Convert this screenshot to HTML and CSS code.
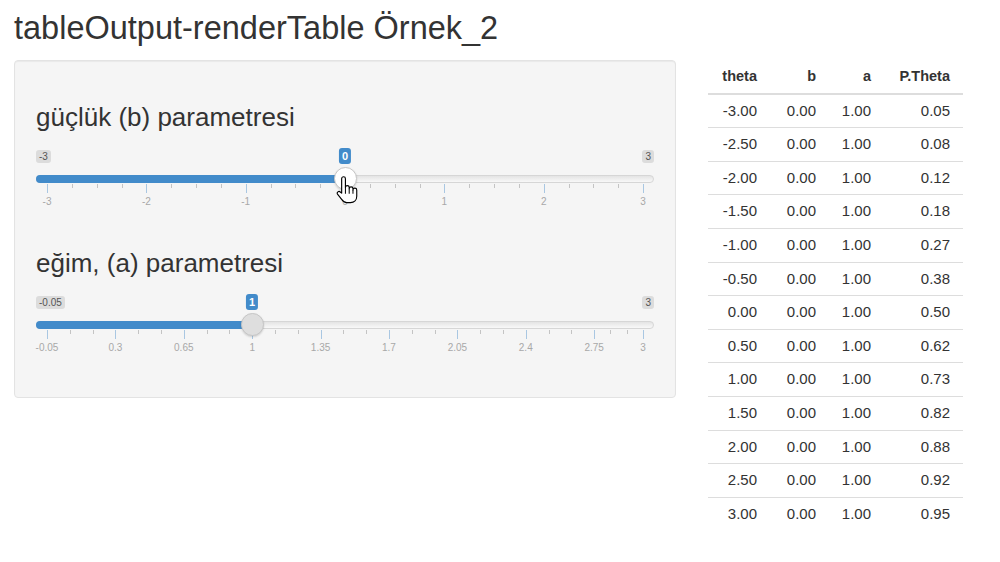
FILE: index.html
```html
<!DOCTYPE html>
<html lang="tr">
<head>
  <meta charset="UTF-8" />
  <meta name="viewport" content="width=device-width, initial-scale=1" />
  <title>tableOutput-renderTable Örnek_2</title>
  <link rel="stylesheet" href="styles.css">
</head>
<body>

  <div class="container">
    <h2 class="title">tableOutput-renderTable Örnek_2</h2>

    <div class="row">
      <div class="well">
        <div class="form-group">
          <h3 class="control-label">güçlük (b) parametresi</h3>
          <div class="irs" data-min="-3" data-max="3" data-value="0" data-step="1" data-minor="3" data-hover="1"></div>
        </div>
        <div class="form-group">
          <h3 class="control-label">eğim, (a) parametresi</h3>
          <div class="irs" data-min="-0.05" data-max="3" data-value="1" data-step="0.35" data-minor="2"></div>
        </div>
      </div>

      <table id="probTable" class="shiny-table">
        <thead>
          <tr>
            <th>theta</th>
            <th>b</th>
            <th>a</th>
            <th>P.Theta</th>
          </tr>
        </thead>
        <tbody></tbody>
      </table>
    </div>
  </div>

  <script>
    function fmt(v) {
      return String(parseFloat(v.toFixed(2)));
    }

    function buildSlider(el) {
      const min = +el.dataset.min;
      const max = +el.dataset.max;
      const value = +el.dataset.value;
      const step = +el.dataset.step;
      const minor = +el.dataset.minor;
      const hover = !!el.dataset.hover;
      const pct = v => (v - min) / (max - min) * 100;

      const majors = [];
      for (let v = min; v < max - 1e-9; v += step) majors.push(v);
      majors.push(max);

      let html = `
        <span class="irs-line"></span>
        <span class="irs-min">${fmt(min)}</span>
        <span class="irs-max">${fmt(max)}</span>
        <div class="irs-inner">
          <span class="irs-bar" style="width: calc(${pct(value)}% + 11px)"></span>`;

      majors.forEach((v, i) => {
        html += `<span class="irs-grid-pol" style="left: ${pct(v)}%"></span>`;
        html += `<span class="irs-grid-text" style="left: ${pct(v)}%">${fmt(v)}</span>`;
        if (i > 0) {
          const prev = majors[i - 1];
          for (let k = 1; k <= minor; k++) {
            const m = prev + (v - prev) * k / (minor + 1);
            html += `<span class="irs-grid-pol small" style="left: ${pct(m)}%"></span>`;
          }
        }
      });

      html += `
          <span class="irs-single" style="left: ${pct(value)}%">${fmt(value)}</span>
          <span class="irs-handle${hover ? ' hover' : ''}" style="left: ${pct(value)}%"></span>`;

      if (hover) {
        html += `
          <svg class="cursor" style="left: ${pct(value)}%" width="22" height="28" viewBox="0 0 17.5 22">
            <path d="M4.5 13.5 V2 a1.5 1.5 0 0 1 3 0 V9 a1.5 1.5 0 0 1 3 0 V10 a1.5 1.5 0 0 1 3 0 V11 a1.5 1.5 0 0 1 3 0 V16 c0 3 -2 5 -5 5 H8.5 c-2 0 -3 -1 -4 -2.5 L1.2 14.3 a1.4 1.4 0 0 1 2.2 -1.7 Z"
                  fill="#fff" stroke="#000" stroke-width="0.9" stroke-linejoin="round" />
            <path d="M7.5 9 V14 M10.5 10 V14 M13.5 11 V14" stroke="#000" stroke-width="0.8" fill="none" />
          </svg>`;
      }

      html += `</div>`;
      el.innerHTML = html;
    }

    document.querySelectorAll('.irs').forEach(buildSlider);

    // P(theta) = 1 / (1 + exp(-a (theta - b)))
    const tbody = document.querySelector('#probTable tbody');
    const b = 0, a = 1;
    for (let i = 0; i <= 12; i++) {
      const theta = -3 + i * 0.5;
      const p = 1 / (1 + Math.exp(-a * (theta - b)));
      const row = document.createElement('tr');
      row.innerHTML = `
        <td>${theta.toFixed(2)}</td>
        <td>${b.toFixed(2)}</td>
        <td>${a.toFixed(2)}</td>
        <td>${p.toFixed(2)}</td>
      `;
      tbody.appendChild(row);
    }
  </script>
</body>
</html>
```

FILE: styles.css
```css
body {
  margin: 0;
  font-family: "Liberation Sans", Arial, sans-serif;
  color: #333;
  background: #fff;
}

.container {
  padding: 0 14px;
}

.title {
  font-size: 32.5px;
  font-weight: normal;
  line-height: 35px;
  margin: 11px 0 14px;
}

.row {
  display: flex;
  align-items: flex-start;
}

.well {
  width: 662px;
  box-sizing: border-box;
  display: flex;
  flex-direction: column;
  padding: 20px 21px 24px;
  background: #f5f5f5;
  border: 1px solid #e3e3e3;
  border-radius: 4px;
  box-shadow: inset 0 1px 1px rgba(0, 0, 0, 0.05);
}

.form-group {
  display: flex;
  flex-direction: column;
  margin-bottom: 17px;
}

.control-label {
  font-size: 26px;
  font-weight: normal;
  line-height: 29px;
  margin: 22px 0 16px;
}

/* range slider */
.irs {
  position: relative;
  height: 62px;
}

.irs-line {
  position: absolute;
  left: 0;
  right: 0;
  top: 27px;
  height: 8px;
  box-sizing: border-box;
  border: 1px solid #d6d6d6;
  border-radius: 8px;
  background: linear-gradient(#e4e4e4, #f8f8f8);
}

.irs-inner {
  position: absolute;
  left: 11px;
  right: 11px;
  top: 0;
  bottom: 0;
}

.irs-bar {
  position: absolute;
  left: -11px;
  top: 27px;
  height: 8px;
  background: #428bca;
  border-radius: 8px 0 0 8px;
}

.irs-handle {
  position: absolute;
  top: 19px;
  width: 23px;
  height: 23px;
  margin-left: -11.5px;
  box-sizing: border-box;
  border-radius: 50%;
  background: #dedede;
  border: 1px solid #c6c6c6;
  box-shadow: 0 1px 2px rgba(0, 0, 0, 0.15);
}

.irs-handle.hover {
  background: #fff;
}

.irs-single {
  position: absolute;
  top: 0;
  transform: translateX(-50%);
  padding: 1px 3px;
  font-size: 11px;
  font-weight: bold;
  line-height: 14px;
  color: #fff;
  background: #428bca;
  border-radius: 3px;
}

.irs-min,
.irs-max {
  position: absolute;
  top: 2px;
  padding: 0 3px;
  font-size: 10px;
  line-height: 13px;
  color: #555;
  background: rgba(0, 0, 0, 0.1);
  border-radius: 3px;
}

.irs-min {
  left: 0;
}

.irs-max {
  right: 0;
}

.irs-grid-pol {
  position: absolute;
  top: 36px;
  width: 1px;
  height: 9px;
  background: #a9c7e2;
}

.irs-grid-pol.small {
  height: 4px;
  background: #c4c4c4;
}

.irs-grid-text {
  position: absolute;
  top: 48px;
  transform: translateX(-50%);
  font-size: 10px;
  line-height: 12px;
  color: #a8a8a8;
  white-space: nowrap;
}

.cursor {
  position: absolute;
  top: 28px;
  margin-left: -9.5px;
}

/* table */
.shiny-table {
  margin-left: 32px;
  border-collapse: collapse;
  font-size: 15px;
}

.shiny-table th,
.shiny-table td {
  text-align: right;
  padding: 7px 13px 7px 0;
  line-height: 18.6px;
}

.shiny-table th {
  font-size: 14.5px;
  font-weight: bold;
  border-bottom: 2px solid #ddd;
}

.shiny-table td {
  border-top: 1px solid #ddd;
}

.shiny-table th:nth-child(1) { width: 49px; }
.shiny-table th:nth-child(2) { width: 46px; }
.shiny-table th:nth-child(3) { width: 42px; }
.shiny-table th:nth-child(4) { width: 66px; }
```
